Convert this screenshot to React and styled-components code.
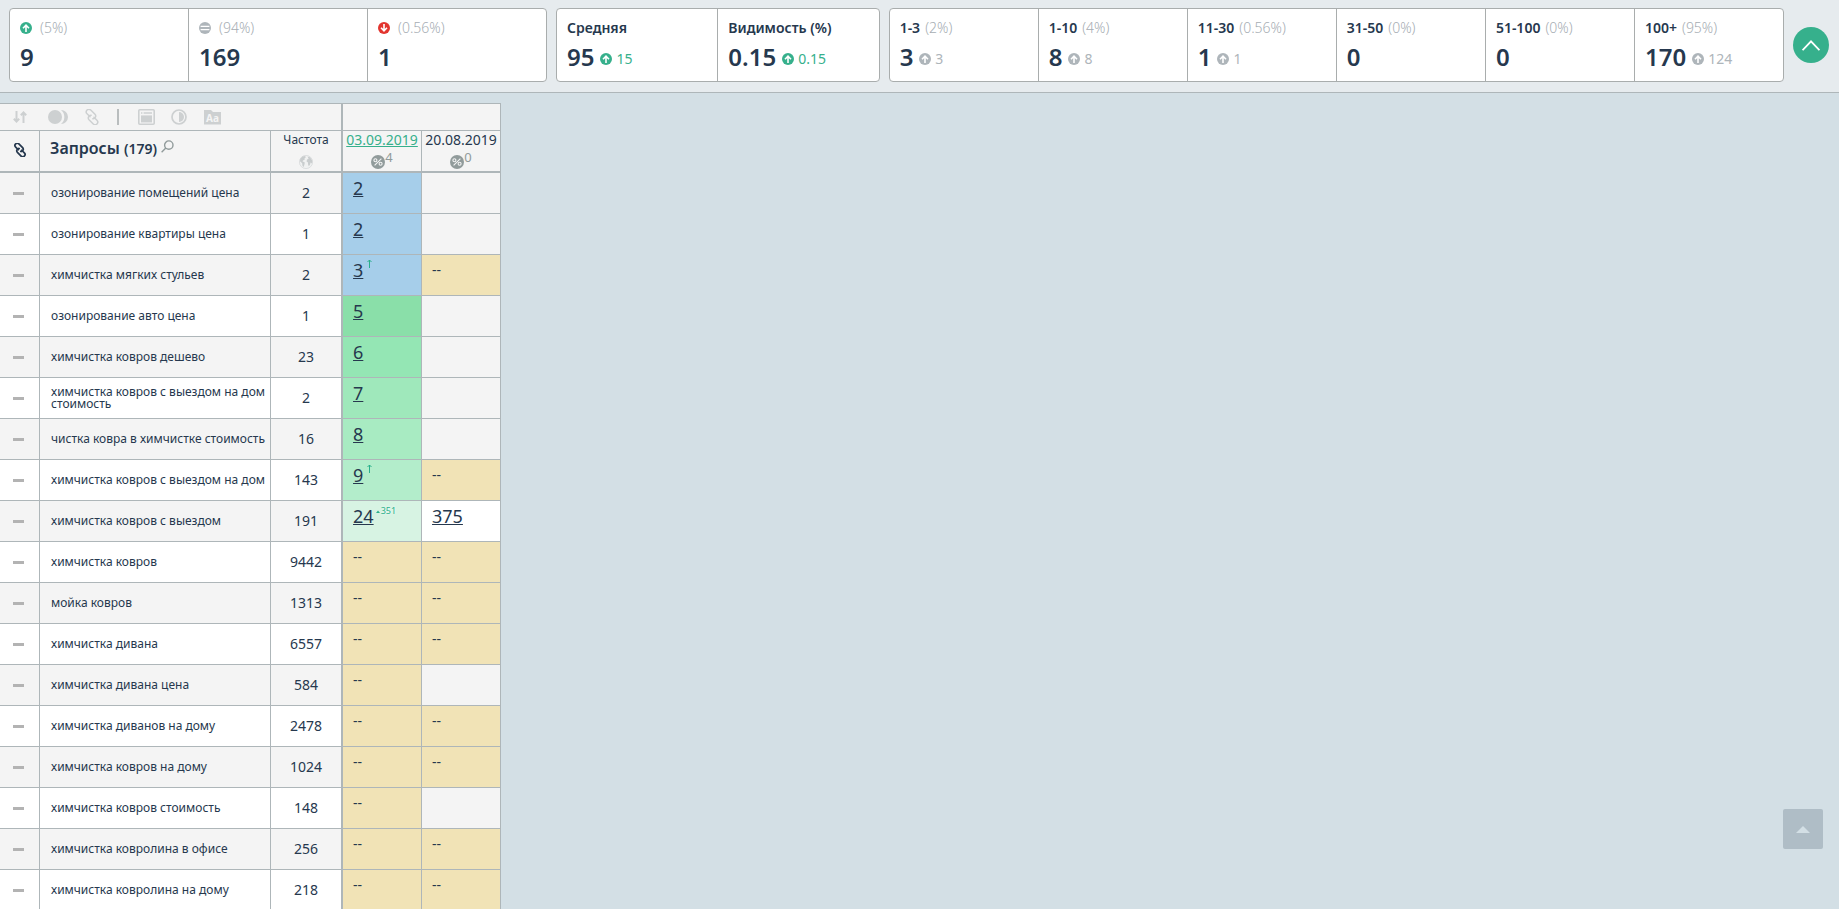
import { useState } from "react";
import styled, { createGlobalStyle } from "styled-components";

const GlobalStyle = createGlobalStyle`
	* {
		box-sizing: border-box;
	}

	body {
		margin: 0;
		background: #d3dfe5;
		color: #26384e;
		font-family: "Noto Sans", "Open Sans", sans-serif;
		font-size: 14px;
	}

	button {
		padding: 0;
		border: 0;
		background: none;
		font: inherit;
		color: inherit;
		cursor: pointer;
	}
`;

const Page = styled.div`
	height: 100vh;
	overflow: hidden;
`;

const Summary = styled.header`
	display: flex;
	align-items: center;
	gap: 9px;
	padding: 8px 10px 10px 9px;
	background: #e6ebee;
	border-bottom: 1px solid #aeb6b9;
`;

const Card = styled.section`
	display: flex;
	flex: ${({ $grow }) => $grow} 1 0;
	background: #fff;
	border: 1px solid #a9adad;
	border-radius: 4px;
`;

const Stat = styled.div`
	flex: 1 1 0;
	min-width: 0;
	height: 72px;
	padding: 8px 10px;
	white-space: nowrap;

	& + & {
		border-left: 1px solid #a9adad;
	}
`;

const StatTitle = styled.div`
	display: flex;
	align-items: center;
	gap: ${({ $wide }) => ($wide ? "8px" : "5px")};
	height: 22px;
	font-weight: 600;
	line-height: 22px;
`;

const Percent = styled.span`
	color: #a6adb3;
	font-size: 14px;
	font-weight: 300;
`;

const StatValue = styled.div`
	display: flex;
	align-items: center;
	gap: 6px;
	font-size: 24px;
	font-weight: 600;
	line-height: 36px;
`;

const Change = styled.span`
	display: flex;
	align-items: center;
	gap: 4px;
	color: ${({ $good }) => ($good ? "#36b08c" : "#aeb5ba")};
	font-size: 14px;
	font-weight: 400;
	line-height: 20px;
	padding-top: 4px;
`;

const CollapseButton = styled.button`
	display: flex;
	align-items: center;
	justify-content: center;
	flex: none;
	width: 36px;
	height: 36px;
	margin-left: auto;

	&& {
		border-radius: 50%;
		background: #36b08c;
	}
`;

const Positions = styled.table`
	width: 501px;
	margin-top: 10px;
	table-layout: fixed;
	border-collapse: separate;
	border-spacing: 0;
	text-align: center;

	th,
	td {
		padding: 0;
		border: 0 solid #aeb6b9;
		border-width: 0 1px 1px 0;
		font-weight: 400;
	}

	tr > .wide {
		border-right-width: 2px;
	}
`;

const Column = styled.col`
	width: ${({ $width }) => $width}px;
`;

const ToolRow = styled.tr`
	height: 28px;
	background: #f4f4f4;

	& > td {
		border-top-width: 1px;
	}
`;

const Tools = styled.div`
	display: flex;
	align-items: center;
	height: 26px;
	padding-left: 13px;
	color: #cdd0d1;
`;

const ToolButton = styled.button`
	display: flex;
	width: ${({ $width }) => $width || 33}px;
`;

const HeadRow = styled.tr`
	height: 42px;
	background: #f4f4f4;

	& > th {
		border-bottom-width: 2px;
	}
`;

const QueriesTitle = styled.div`
	display: flex;
	align-items: flex-start;
	gap: 4px;
	padding: 0 0 6px 10px;
	font-size: 16px;
	font-weight: 600;
	line-height: 22px;

	small {
		font-size: 14px;
	}

	button {
		display: flex;
		padding-top: 3px;
	}
`;

const HeadCell = styled.div`
	display: flex;
	flex-direction: column;
	align-items: center;
	height: 40px;
	font-size: ${({ $small }) => ($small ? "12px" : "14px")};
	line-height: 18px;
`;

const DateLink = styled.a`
	color: ${({ $active }) => ($active ? "#36b08c" : "#26384e")};
	text-decoration: ${({ $active }) => ($active ? "underline" : "none")};
`;

const Marks = styled.div`
	display: flex;
	align-items: flex-start;
	height: 22px;
	color: #919b9b;
	font-size: 13px;
	line-height: 16px;

	svg {
		margin-top: 6px;
	}
`;

const Row = styled.tr`
	height: 41px;
	background: #fff;

	&:nth-child(odd) {
		background: #f4f4f4;
	}
`;

const Dash = styled.button`
	display: block;
	width: 11px;
	height: 3px;
	margin-left: 13px;

	&& {
		background: #b3b3b3;
	}
`;

const Query = styled.th`
	&& {
		padding-left: 11px;
	}
	text-align: left;
	font-size: 12px;
	line-height: 12px;
`;

const Frequency = styled.td`
	&& {
		padding-bottom: 2px;
	}
`;

const Position = styled.td`
	background: ${({ $color }) => $color};
`;

const PositionValue = styled.div`
	display: flex;
	align-items: flex-start;
	gap: 2px;
	height: 40px;
	padding: 3px 0 0 10px;
	line-height: 24px;
`;

const PositionLink = styled.a`
	color: #26384e;
	font-size: 18px;
	text-decoration: underline;
`;

const Delta = styled.span`
	display: flex;
	align-items: center;
	gap: 1px;
	padding-top: 1px;
	color: #29b08c;
	font-size: 9px;
	line-height: 12px;
	text-shadow: 0 0 3px #fff;
`;

const ToTop = styled.button`
	position: fixed;
	right: 16px;
	bottom: 60px;
	display: flex;
	align-items: center;
	justify-content: center;
	width: 40px;
	height: 40px;

	&& {
		border-radius: 2px;
		background: #afbdc6;
	}
`;

const EMPTY = "#f4f4f4";
const MISSING = "#f1e3b6";

const cards = [
	{
		grow: 3,
		stats: [
			{ icon: "up", percent: "(5%)", value: "9" },
			{ icon: "same", percent: "(94%)", value: "169" },
			{ icon: "down", percent: "(0.56%)", value: "1" },
		],
	},
	{
		grow: 1.8,
		stats: [
			{ title: "Средняя", value: "95", change: "15", good: true },
			{ title: "Видимость (%)", value: "0.15", change: "0.15", good: true },
		],
	},
	{
		grow: 5,
		stats: [
			{ title: "1-3", percent: "(2%)", value: "3", change: "3" },
			{ title: "1-10", percent: "(4%)", value: "8", change: "8" },
			{ title: "11-30", percent: "(0.56%)", value: "1", change: "1" },
			{ title: "31-50", percent: "(0%)", value: "0" },
			{ title: "51-100", percent: "(0%)", value: "0" },
			{ title: "100+", percent: "(95%)", value: "170", change: "124" },
		],
	},
];

const none = { color: EMPTY };
const missing = { value: "--", color: MISSING };

// query, frequency, position on each of the two dates
const rows = [
	["озонирование помещений цена", 2, { value: 2, color: "#a6ceea" }, none],
	["озонирование квартиры цена", 1, { value: 2, color: "#a6ceea" }, none],
	["химчистка мягких стульев", 2, { value: 3, color: "#a6ceea", delta: "new" }, missing],
	["озонирование авто цена", 1, { value: 5, color: "#8adfa9" }, none],
	["химчистка ковров дешево", 23, { value: 6, color: "#94e6b4" }, none],
	["химчистка ковров с выездом на дом стоимость", 2, { value: 7, color: "#9fe8bb" }, none],
	["чистка ковра в химчистке стоимость", 16, { value: 8, color: "#a8ebc2" }, none],
	["химчистка ковров с выездом на дом", 143, { value: 9, color: "#b3edcb", delta: "new" }, missing],
	["химчистка ковров с выездом", 191, { value: 24, color: "#d7f3e3", delta: "351" }, { value: 375, color: "#fff" }],
	["химчистка ковров", 9442, missing, missing],
	["мойка ковров", 1313, missing, missing],
	["химчистка дивана", 6557, missing, missing],
	["химчистка дивана цена", 584, missing, none],
	["химчистка диванов на дому", 2478, missing, missing],
	["химчистка ковров на дому", 1024, missing, missing],
	["химчистка ковров стоимость", 148, missing, none],
	["химчистка ковролина в офисе", 256, missing, missing],
	["химчистка ковролина на дому", 218, missing, missing],
];

const RoundIcon = ({ type, color }) => (
	<svg width="12" height="12" viewBox="0 0 12 12" fill="none" stroke="#fff" strokeWidth="1.6">
		<circle cx="6" cy="6" r="6" fill={color} stroke="none" />
		{type === "up" && <path d="M6 10V3.4M3 6.2L6 3.2L9 6.2" />}
		{type === "down" && <path d="M6 2V8.6M3 5.8L6 8.8L9 5.8" />}
		{type === "same" && <path d="M1.6 4.4H10.4M1.6 7.6H10.4" strokeWidth="1.4" />}
	</svg>
);

const LinkIcon = ({ size, width }) => (
	<svg width={size} height={size} viewBox="-8 -8 16 16" fill="none" stroke="currentColor" strokeWidth={width} strokeLinecap="round">
		<g transform="rotate(45)">
			<path d="M-1.6 1.2H-5.8A2.6 2.6 0 0 1-5.8-4H.2A2.6 2.6 0 0 1 1.8.6" />
			<path d="M1.6-1.2H5.8A2.6 2.6 0 0 1 5.8 4H-.2A2.6 2.6 0 0 1-1.8-.6" />
		</g>
	</svg>
);

const SortIcon = () => (
	<svg width="14" height="12" viewBox="0 0 14 12" fill="none" stroke="currentColor" strokeWidth="2">
		<path d="M3.5 0V10.5M.8 7.8L3.5 10.5L6.2 7.8M10.5 12V1.5M7.8 4.2L10.5 1.5L13.2 4.2" />
	</svg>
);

const GroupIcon = () => (
	<svg width="20" height="14" viewBox="0 0 20 14" fill="currentColor">
		<circle cx="7" cy="7" r="7" />
		<path d="M13 0A7 7 0 0 1 13 14A9 9 0 0 0 13 0Z" />
	</svg>
);

const WindowIcon = () => (
	<svg width="17" height="16" viewBox="0 0 17 16" fill="none" stroke="currentColor" strokeWidth="1.6">
		<rect x=".8" y=".8" width="15.4" height="14.4" rx="1" />
		<path d="M3 4H4.4M5.6 4H14" />
		<rect x="3" y="6.4" width="11" height="7" fill="currentColor" stroke="none" />
	</svg>
);

const ContrastIcon = () => (
	<svg width="16" height="16" viewBox="0 0 16 16">
		<circle cx="8" cy="8" r="7" fill="none" stroke="currentColor" strokeWidth="1.7" />
		<path d="M8 3A5 5 0 0 1 8 13Z" fill="currentColor" />
	</svg>
);

const FontIcon = () => (
	<svg width="17" height="16" viewBox="0 0 17 16">
		<path d="M0 1H7L9 3H17V15.5H0Z" fill="currentColor" />
		<text x="8.5" y="13" fill="#f4f4f4" fontSize="10" fontWeight="700" textAnchor="middle">Aa</text>
	</svg>
);

const SearchIcon = () => (
	<svg width="13" height="13" viewBox="0 0 13 13" fill="none" stroke="#919b9b" strokeWidth="1.4">
		<circle cx="7.8" cy="5.1" r="4.2" />
		<path d="M4.8 8.1L.6 12.2" />
	</svg>
);

const GlobeIcon = () => (
	<svg width="14" height="14" viewBox="0 0 14 14">
		<circle cx="7" cy="7" r="6.6" fill="#f0f1f1" stroke="#d3d6d7" strokeWidth=".7" />
		<path d="M1.2 4L3.4 1.4L6.2 1L6.8 2.4L5.4 3.2L6 4.2L4.4 5.2L3.4 6.2L5.8 7.6L5.4 9.8L4.4 12.2L3.4 10.4L3.2 8.2L1 6.2ZM8.6 1.4L11 2.2L13.2 5.6L12.8 8.4L11.6 7.4L11 9.8L9.8 11.2L9 9.2L9 7.4L7.6 6.4L8 4.4L9.6 3.8Z" fill="#c9cdce" />
	</svg>
);

const PercentIcon = () => (
	<svg width="14" height="14" viewBox="0 0 14 14" fill="none" stroke="#f4f4f4" strokeWidth="1.1">
		<circle cx="7" cy="7" r="7" fill="#919b9b" stroke="none" />
		<circle cx="4.4" cy="5.2" r="1.5" />
		<circle cx="9.6" cy="8.8" r="1.5" />
		<path d="M10.4 3.6L3.6 10.4" />
	</svg>
);

const StatBlock = ({ icon, title, percent, value, change, good }) => (
	<Stat>
		<StatTitle $wide={Boolean(icon)}>
			{icon && (
				<RoundIcon
					type={icon}
					color={{ up: "#36b08c", same: "#aeb5ba", down: "#e2352f" }[icon]}
				/>
			)}
			{title && <span>{title}</span>}
			{percent && <Percent>{percent}</Percent>}
		</StatTitle>
		<StatValue>
			{value}
			{change && (
				<Change $good={good}>
					<RoundIcon type="up" color={good ? "#36b08c" : "#aeb5ba"} />
					{change}
				</Change>
			)}
		</StatValue>
	</Stat>
);

const PositionCell = ({ value, color, delta }) => (
	<Position $color={color}>
		<PositionValue>
			{value === "--" && value}
			{value && value !== "--" && <PositionLink href="#position">{value}</PositionLink>}
			{delta && (
				<Delta>
					{delta === "new" ? (
						<svg width="9" height="9" viewBox="0 0 9 9" fill="none" stroke="currentColor">
							<path d="M4.5 9V1M2.5 3L4.5 1L6.5 3" />
						</svg>
					) : (
						<>
							<svg width="4" height="3" viewBox="0 0 4 3" fill="currentColor">
								<path d="M0 3L2 .5L4 3Z" />
							</svg>
							{delta}
						</>
					)}
				</Delta>
			)}
		</PositionValue>
	</Position>
);

export default function App() {
	const [openSummary, setOpenSummary] = useState(true);

	return (
		<Page>
			<GlobalStyle />
			<Summary>
				{openSummary &&
					cards.map((card) => (
						<Card key={card.grow} $grow={card.grow}>
							{card.stats.map((stat, i) => (
								<StatBlock key={i} {...stat} />
							))}
						</Card>
					))}
				<CollapseButton
					aria-label="Свернуть"
					onClick={() => setOpenSummary(!openSummary)}
				>
					<svg width="18" height="11" viewBox="0 0 18 11" fill="none" stroke="#fff" strokeWidth="1.8">
						<path d="M.6 10.2L9 1.4L17.4 10.2" />
					</svg>
				</CollapseButton>
			</Summary>

			<Positions>
				<colgroup>
					<Column $width={40} />
					<Column $width={231} />
					<Column $width={72} />
					<Column $width={79} />
					<Column $width={79} />
				</colgroup>
				<thead>
					<ToolRow>
						<td colSpan={3} className="wide">
							<Tools>
								<ToolButton $width={35} aria-label="Сортировка"><SortIcon /></ToolButton>
								<ToolButton $width={36} aria-label="Группы"><GroupIcon /></ToolButton>
								<ToolButton aria-label="Ссылки"><LinkIcon size={16} width={1.5} /></ToolButton>
								<ToolButton as="span" $width={21}>
									<svg width="2" height="16"><path d="M1 0V16" stroke="#b9bdbe" strokeWidth="2" /></svg>
								</ToolButton>
								<ToolButton aria-label="Вид"><WindowIcon /></ToolButton>
								<ToolButton aria-label="Контраст"><ContrastIcon /></ToolButton>
								<ToolButton aria-label="Шрифт"><FontIcon /></ToolButton>
							</Tools>
						</td>
						<td colSpan={2} />
					</ToolRow>
					<HeadRow>
						<th><LinkIcon size={14} width={2} /></th>
						<th>
							<QueriesTitle>
								<span>Запросы <small>(179)</small></span>
								<button aria-label="Поиск"><SearchIcon /></button>
							</QueriesTitle>
						</th>
						<th className="wide">
							<HeadCell $small>
								Частота
								<Marks><GlobeIcon /></Marks>
							</HeadCell>
						</th>
						<th>
							<HeadCell>
								<DateLink href="#date" $active>03.09.2019</DateLink>
								<Marks><PercentIcon />4</Marks>
							</HeadCell>
						</th>
						<th>
							<HeadCell>
								<DateLink href="#date">20.08.2019</DateLink>
								<Marks><PercentIcon />0</Marks>
							</HeadCell>
						</th>
					</HeadRow>
				</thead>
				<tbody>
					{rows.map(([query, frequency, current, previous]) => (
						<Row key={query}>
							<td><Dash aria-label="Ссылка" /></td>
							<Query scope="row">{query}</Query>
							<Frequency className="wide">{frequency}</Frequency>
							<PositionCell {...current} />
							<PositionCell {...previous} />
						</Row>
					))}
				</tbody>
			</Positions>

			<ToTop aria-label="Наверх">
				<svg width="14" height="7" viewBox="0 0 14 7" fill="#d3dfe5">
					<path d="M0 7L7 0L14 7Z" />
				</svg>
			</ToTop>
		</Page>
	);
}
